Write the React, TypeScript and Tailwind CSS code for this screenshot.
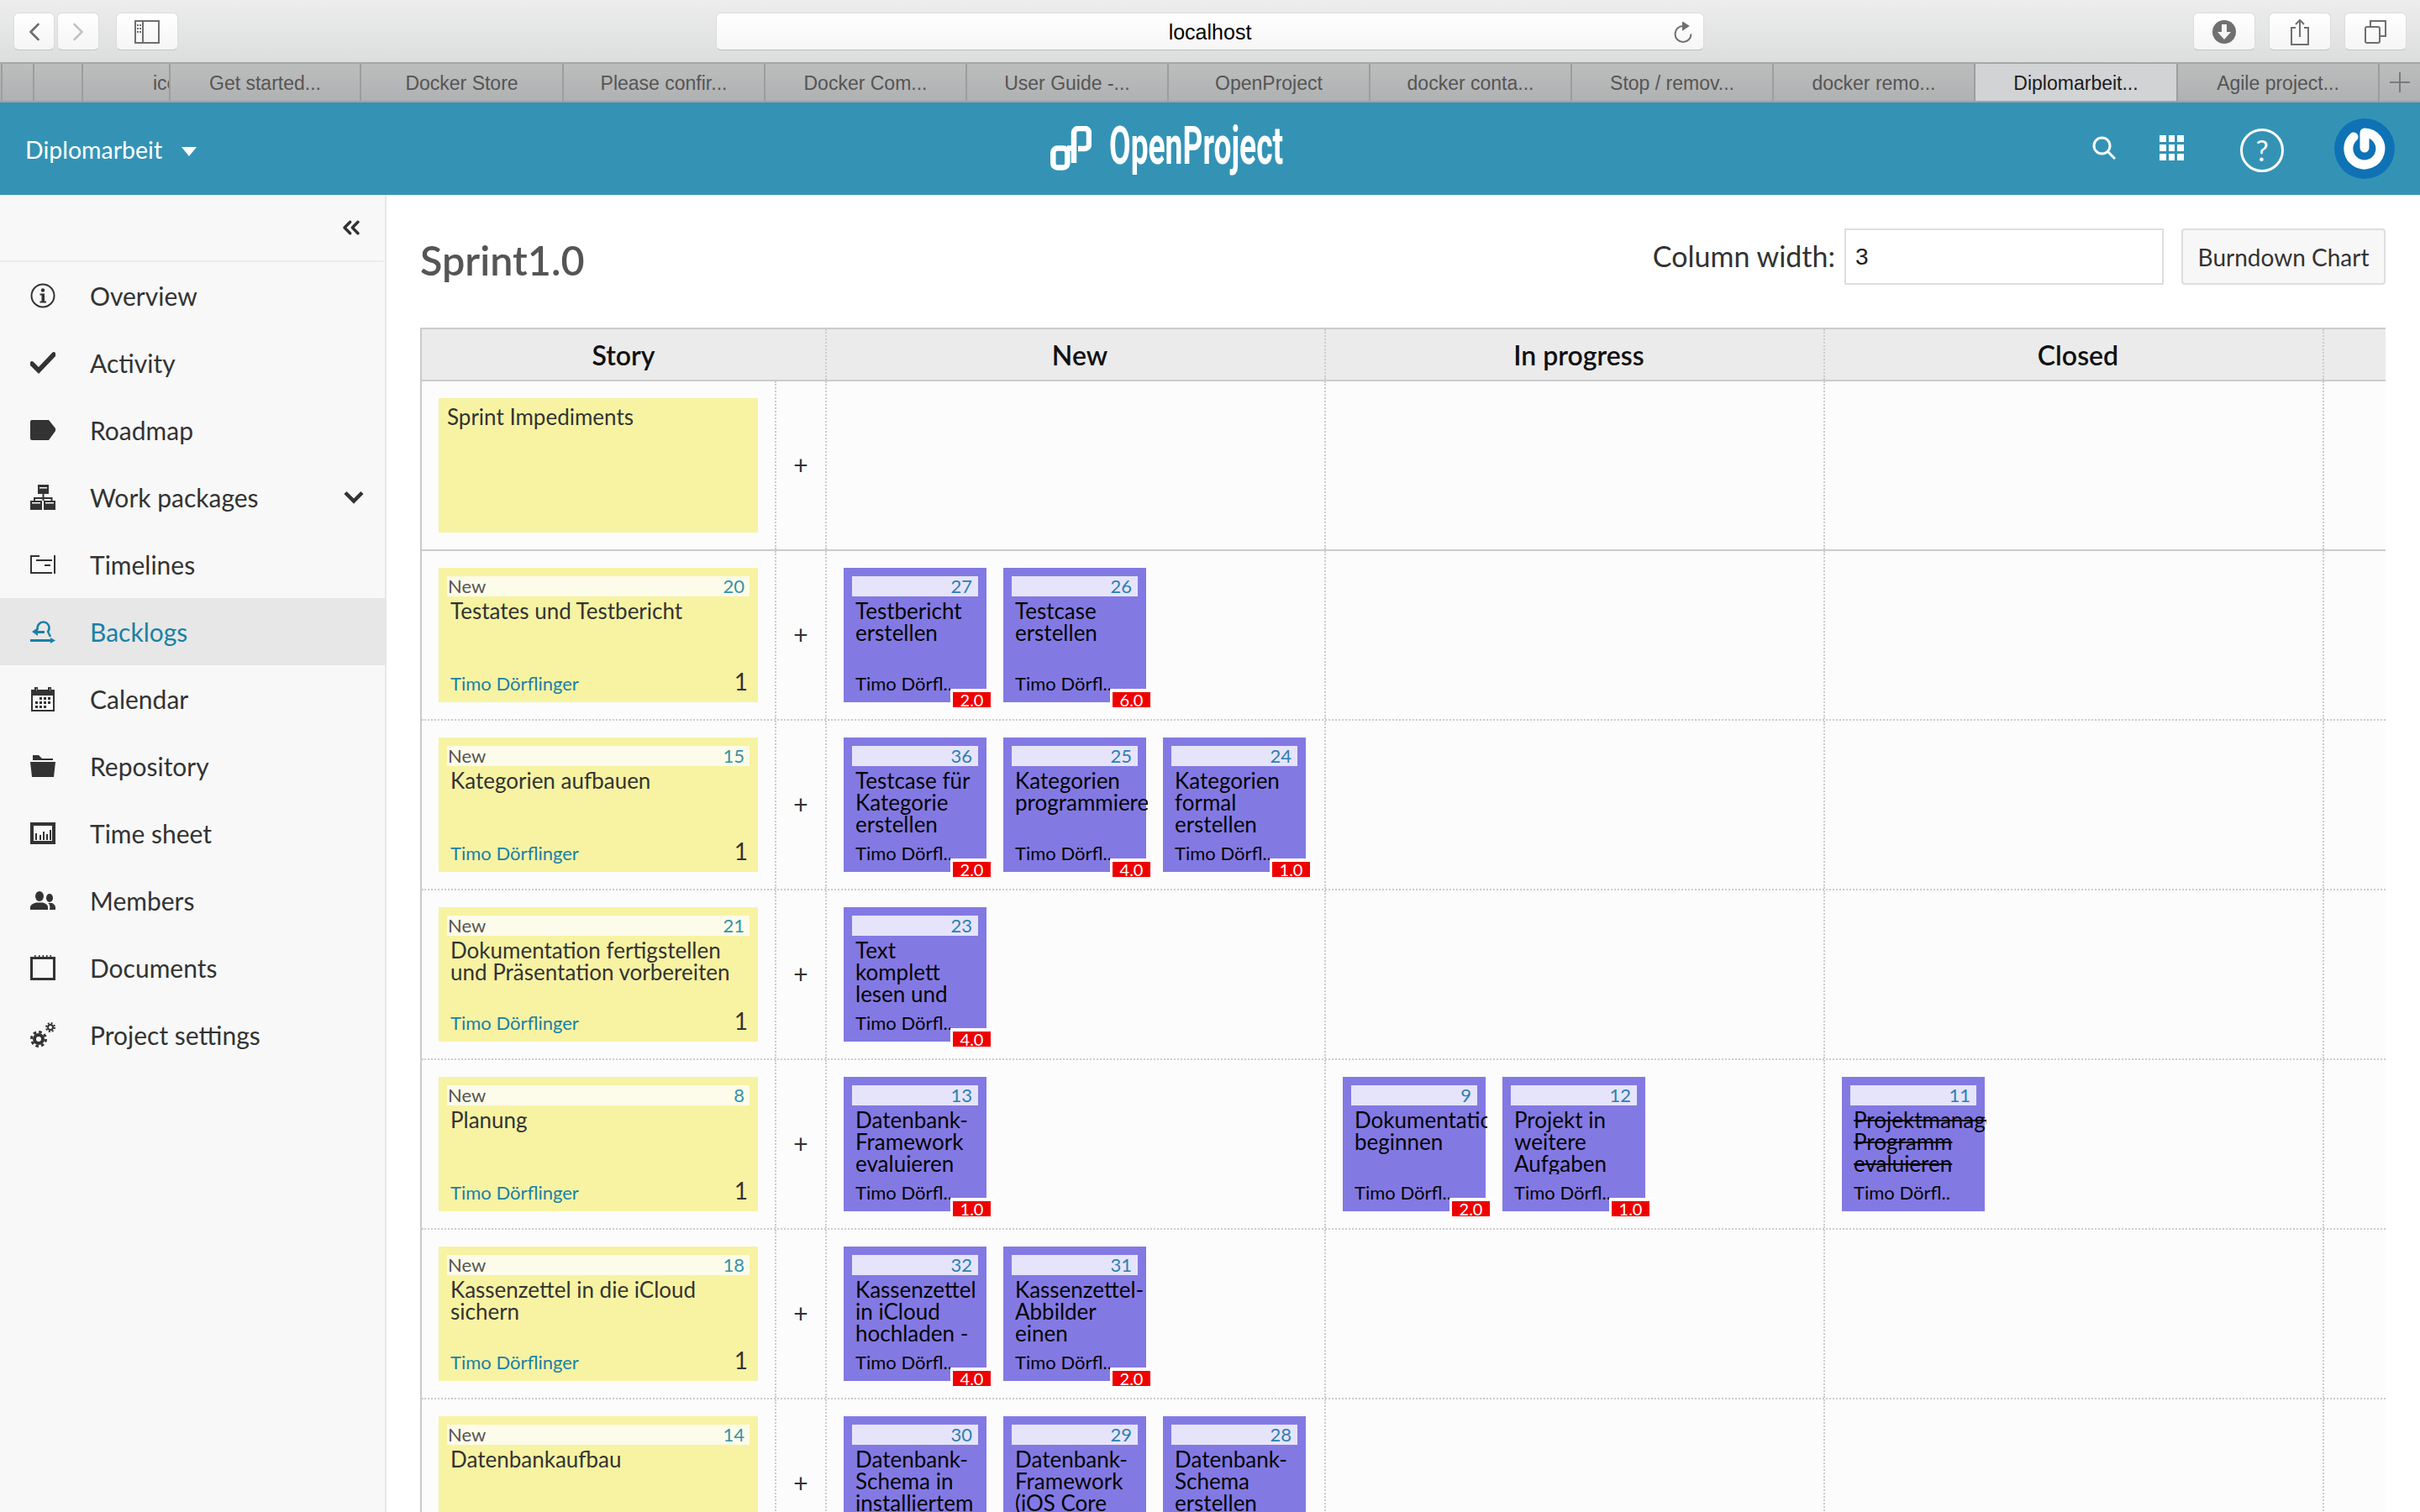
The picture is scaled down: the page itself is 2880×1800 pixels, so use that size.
import { ChevronLeft, ChevronRight, ChevronsLeft } from 'lucide-react';

type Task = { id: number; title: string; hours?: string; closed?: boolean };
type Story = { id: number; title: string; fresh: Task[]; progress?: Task[]; done?: Task[] };

const tabs = [
  { w: 'w-[3px]', label: '' },
  { w: 'w-[38px]', label: '' },
  { w: 'w-[58px]', label: '' },
  { w: 'w-[104px]', label: 'icon', clip: true },
  { w: 'w-[227px]', label: 'Get started...' },
  { w: 'w-[241px]', label: 'Docker Store' },
  { w: 'w-[240px]', label: 'Please confir...' },
  { w: 'w-[240px]', label: 'Docker Com...' },
  { w: 'w-[240px]', label: 'User Guide -...' },
  { w: 'w-[240px]', label: 'OpenProject' },
  { w: 'w-[240px]', label: 'docker conta...' },
  { w: 'w-[240px]', label: 'Stop / remov...' },
  { w: 'w-[240px]', label: 'docker remo...' },
  { w: 'w-[241px]', label: 'Diplomarbeit...', active: true },
  { w: 'w-[240px]', label: 'Agile project...' },
];

const stories: Story[] = [
  {
    id: 20,
    title: 'Testates und Testbericht',
    fresh: [
      { id: 27, title: 'Testbericht erstellen', hours: '2.0' },
      { id: 26, title: 'Testcase erstellen', hours: '6.0' },
    ],
  },
  {
    id: 15,
    title: 'Kategorien aufbauen',
    fresh: [
      { id: 36, title: 'Testcase für Kategorie erstellen', hours: '2.0' },
      { id: 25, title: 'Kategorien programmieren', hours: '4.0' },
      { id: 24, title: 'Kategorien formal erstellen', hours: '1.0' },
    ],
  },
  {
    id: 21,
    title: 'Dokumentation fertigstellen und Präsentation vorbereiten',
    fresh: [{ id: 23, title: 'Text komplett lesen und', hours: '4.0' }],
  },
  {
    id: 8,
    title: 'Planung',
    fresh: [{ id: 13, title: 'Datenbank-Framework evaluieren', hours: '1.0' }],
    progress: [
      { id: 9, title: 'Dokumentation beginnen', hours: '2.0' },
      { id: 12, title: 'Projekt in weitere Aufgaben', hours: '1.0' },
    ],
    done: [{ id: 11, title: 'Projektmanagement Programm evaluieren', closed: true }],
  },
  {
    id: 18,
    title: 'Kassenzettel in die iCloud sichern',
    fresh: [
      { id: 32, title: 'Kassenzettel in iCloud hochladen -', hours: '4.0' },
      { id: 31, title: 'Kassenzettel-Abbilder einen', hours: '2.0' },
    ],
  },
  {
    id: 14,
    title: 'Datenbankaufbau',
    fresh: [
      { id: 30, title: 'Datenbank-Schema in installiertem' },
      { id: 29, title: 'Datenbank-Framework (iOS Core' },
      { id: 28, title: 'Datenbank-Schema erstellen' },
    ],
  },
];

function MenuIcon({ name }: { name: string }) {
  const common = { width: 30, height: 30, viewBox: '0 0 30 30', fill: 'currentColor' };
  switch (name) {
    case 'info':
      return (
        <svg {...common}>
          <circle cx="15" cy="15" r="13.5" fill="none" stroke="currentColor" strokeWidth="2" />
          <circle cx="15" cy="8.5" r="2.2" />
          <path d="M11.5 12.5h5.5v9h2v2h-7.500v-2h2v-7h-2z" />
        </svg>
      );
    case 'check':
      return (
        <svg {...common}>
          <path d="M2 16l8 8L28 5" fill="none" stroke="currentColor" strokeWidth="5.500" strokeLinecap="round" />
        </svg>
      );
    case 'tag':
      return (
        <svg {...common}>
          <path d="M2 3h20l8 10v3l-8 11H2a2 2 0 0 1-2-2V5a2 2 0 0 1 2-2z" />
        </svg>
      );
    case 'tree':
      return (
        <svg {...common}>
          <path d="M9 0h13v11H9zM14.5 11h2v4h10v4h-2v-2H16.5v2h-2v-2H6v2H4v-4h10.500z" />
          <path d="M0 19h14v11H0zM16 19h14v11H16z" />
          <path d="M11 3h9v1.500h-9zM2 21h10v1.500H2zM18 21h10v1.500H18z" fill="#f8f8f8" />
        </svg>
      );
    case 'timeline':
      return (
        <svg {...common}>
          <path d="M0 4h2v22H0zM28 4h2v22h-2zM2 4h9v2H2zM7 9h19v2H7zM17 15h7v2h-7zM2 24h24v2H2z" />
        </svg>
      );
    case 'backlog':
      return (
        <svg {...common}>
          <path d="M0 24h24v-2l6 3.500-6 3.500v-2H0z" />
          <path d="M9 13A7 7 0 1 1 21 15l3 6" fill="none" stroke="currentColor" strokeWidth="2.400" />
          <path d="M2 15l7-5v4h8v3H9v3z" />
        </svg>
      );
    case 'calendar':
      return (
        <svg {...common}>
          <path
            fillRule="evenodd"
            d="M1 4h4V1h4v3h12V1h4v3h4v26H1zM3 11v17h24V11zM7 2.500v3h.5v-3zM23 2.500v3h.5v-3z"
          />
          <path d="M11 13h3v3h-3zM16 13h3v3h-3zM21 13h3v3h-3zM6 18h3v3H6zM11 18h3v3h-3zM16 18h3v3h-3zM21 18h3v3h-3zM6 23h3v3H6zM11 23h3v3h-3zM16 23h3v3h-3z" />
        </svg>
      );
    case 'folder':
      return (
        <svg {...common}>
          <path d="M3 2h7l4 4h13v2H3zM0 10h30l-2 18H2z" />
        </svg>
      );
    case 'sheet':
      return (
        <svg {...common}>
          <path fillRule="evenodd" d="M0 2h30v26H0zM4 6v18h22V6z" />
          <path d="M6 15h2v8H6zM11 17h2v6h-2zM15 13h2v10h-2zM19 16h2v7h-2zM23 11h2v12h-2z" />
        </svg>
      );
    case 'members':
      return (
        <svg {...common}>
          <ellipse cx="11" cy="10" rx="5" ry="6" />
          <path d="M0 26v-3c0-3 4-4.500 7-5.500h8c3 1 6 2.500 6 5.500v3z" />
          <ellipse cx="23" cy="12" rx="4" ry="5" />
          <path d="M23 26h7v-3c0-2-2-4-4-5h-5c2 1 3 4 2 8z" />
        </svg>
      );
    case 'docs':
      return (
        <svg {...common}>
          <rect x="1.500" y="3.500" width="27" height="25" fill="none" stroke="currentColor" strokeWidth="3" />
          <path d="M5 0h1.500v5H5zM10 0h1.500v5H10zM14.500 0H16v5h-1.500zM19 0h1.500v5H19zM23.500 0H25v5h-1.500z" />
        </svg>
      );
    default:
      return (
        <svg {...common}>
          <circle cx="10" cy="20" r="5" fill="none" stroke="currentColor" strokeWidth="4" />
          <circle cx="10" cy="20" r="8.500" fill="none" stroke="currentColor" strokeWidth="3" strokeDasharray="3.500 3.170" />
          <circle cx="24" cy="6" r="3" fill="none" stroke="currentColor" strokeWidth="2" />
          <circle cx="24" cy="6" r="5" fill="none" stroke="currentColor" strokeWidth="2" strokeDasharray="2 1.930" />
        </svg>
      );
  }
}

const menu = [
  { label: 'Overview', icon: 'info' },
  { label: 'Activity', icon: 'check' },
  { label: 'Roadmap', icon: 'tag' },
  { label: 'Work packages', icon: 'tree', expand: true },
  { label: 'Timelines', icon: 'timeline' },
  { label: 'Backlogs', icon: 'backlog', active: true },
  { label: 'Calendar', icon: 'calendar' },
  { label: 'Repository', icon: 'folder' },
  { label: 'Time sheet', icon: 'sheet' },
  { label: 'Members', icon: 'members' },
  { label: 'Documents', icon: 'docs' },
  { label: 'Project settings', icon: 'gears' },
];

function ToolButton({ className, children }: { className: string; children: React.ReactNode }) {
  return (
    <div
      className={`h-[45px] flex items-center justify-center rounded-[6px] bg-gradient-to-b from-white to-[#f5f5f5] border border-[#dcdcdc] border-b-[#c4c4c4] text-[#6f6f6f] ${className}`}
    >
      {children}
    </div>
  );
}

function BrowserChrome() {
  return (
    <>
      <div className="h-[74px] flex items-start pt-[15px] pl-[16px] bg-gradient-to-b from-[#ededed] to-[#dcdedd]">
        <ToolButton className="w-[49px] mr-[3px]">
          <ChevronLeft size={36} strokeWidth={1.8} />
        </ToolButton>
        <ToolButton className="w-[50px] mr-[20px] text-[#c4c4c4]">
          <ChevronRight size={36} strokeWidth={1.8} />
        </ToolButton>
        <ToolButton className="w-[74px] mr-[640px]">
          <svg width="30" height="28" viewBox="0 0 30 28" fill="none" stroke="currentColor" strokeWidth="2">
            <rect x="1" y="1" width="28" height="26" />
            <path d="M10 1v26" />
            <path d="M3 6h5M3 10h5M3 14h5" strokeDasharray="2 1" />
          </svg>
        </ToolButton>
        <div className="relative w-[1176px] h-[45px] flex items-center justify-center pt-[2px] rounded-[6px] bg-gradient-to-b from-white to-[#f6f6f6] border border-[#dcdcdc] border-b-[#bdbdbd] font-['Liberation_Sans',sans-serif] text-[25px] text-black">
          localhost
          <svg className="absolute right-[12px] top-[10px]" width="24" height="26" viewBox="0 0 24 26" fill="none" stroke="#6f6f6f" strokeWidth="2">
            <path d="M12 5a9.500 9.500 0 1 0 9.500 9.500" />
            <path d="M12 1l6 4-6 4z" fill="#6f6f6f" />
          </svg>
        </div>
        <ToolButton className="w-[74px] ml-[582px]">
          <svg width="28" height="30" viewBox="0 0 28 30">
            <circle cx="14" cy="15" r="14" fill="#707070" />
            <path d="M11 6h6v9h5l-8 9-8-9h5z" fill="#f7f7f7" />
          </svg>
        </ToolButton>
        <ToolButton className="w-[74px] ml-[16px]">
          <svg width="24" height="32" viewBox="0 0 24 32" fill="none" stroke="currentColor" strokeWidth="2">
            <path d="M7 11H2v20h20V11h-5M12 22V2M7 7l5-5 5 5" />
          </svg>
        </ToolButton>
        <ToolButton className="w-[74px] ml-[16px]">
          <svg width="26" height="28" viewBox="0 0 26 28" fill="none" stroke="currentColor" strokeWidth="2">
            <rect x="1" y="8" width="17" height="19" rx="2" />
            <path d="M7 7V1h18v18h-6" />
          </svg>
        </ToolButton>
      </div>
      <div className="h-[48px] flex border-y-[2px] border-t-[#a6a6a6] border-b-[#a2a2a2] bg-gradient-to-b from-[#bcbdbd] to-[#b0b1b2] font-['Liberation_Sans',sans-serif] text-[23px] text-[#555]">
        {tabs.map((t, i) => (
          <div
            key={i}
            className={`${t.w} flex items-center pt-[2px] border-r-[2px] border-[#9d9d9d] overflow-hidden ${
              t.clip ? 'justify-start pl-[83px]' : 'justify-center'
            } ${t.active ? 'bg-[#d2d3d5] text-[#1c1c1c]' : ''}`}
          >
            {t.label}
          </div>
        ))}
        <div className="flex-1 flex items-center justify-center text-[#7a7a7a]">
          <svg width="24" height="24" viewBox="0 0 24 24" stroke="currentColor" strokeWidth="2">
            <path d="M12 0v24M0 12h24" />
          </svg>
        </div>
      </div>
    </>
  );
}

function TopNav() {
  return (
    <div className="h-[110px] flex items-center bg-[#3493b5] text-white">
      <div className="w-[1250px] flex items-center pl-[30px] pt-[2px] text-[28.5px]">
        Diplomarbeit
        <span className="ml-[23px] mt-[4px] border-x-[9.500px] border-t-[11px] border-x-transparent border-t-white" />
      </div>
      <svg width="49" height="53" viewBox="0 0 49 53" fill="none" stroke="white" strokeWidth="6.500" className="mt-[-2px]">
        <rect x="3.300" y="26.500" width="17" height="23" rx="5" />
        <path d="M28 44V8a5 5 0 0 1 5-5h8a5 5 0 0 1 5 5v14a5 5 0 0 1-5 5h-8" />
        <path d="M20 26.500h8" />
      </svg>
      <div className="w-[210px] ml-[21px] mt-[-8px] h-[70px] flex items-center">
        <span className="origin-left scale-x-[0.59] font-['Roboto',sans-serif] font-bold text-[63px] leading-none whitespace-nowrap">
          OpenProject
        </span>
      </div>
      <svg className="ml-[960px] mt-[-2px]" width="28" height="28" viewBox="0 0 28 28" fill="none" stroke="white" strokeWidth="3">
        <circle cx="11.500" cy="11.500" r="9.500" />
        <path d="M18 18l9 9" />
      </svg>
      <div className="ml-[52px] grid grid-cols-3 gap-[3px] w-[29px] mt-[-2px]">
        {Array.from({ length: 9 }).map((_, i) => (
          <span key={i} className="h-[8px] bg-white" />
        ))}
      </div>
      <div className="ml-[67px] w-[52px] h-[52px] rounded-full border-[3px] border-white flex items-center justify-center text-[34px] leading-none mt-[3px]">
        ?
      </div>
      <div className="ml-[60px] w-[72px] h-[72px] rounded-full bg-[#0e72b5] flex items-center justify-center">
        <svg width="50" height="50" viewBox="0 0 50 50" fill="none" stroke="white" strokeWidth="11" strokeLinecap="round">
          <path d="M12 11A19 19 0 1 0 25 6V24" strokeLinejoin="round" />
        </svg>
      </div>
    </div>
  );
}

function Sidebar() {
  return (
    <div className="w-[460px] shrink-0 bg-[#f8f8f8] border-r-[2px] border-[#e7e7e7] text-[#333]">
      <div className="h-[80px] flex items-center justify-end pr-[24px] border-b-[2px] border-[#ededed]">
        <ChevronsLeft size={32} strokeWidth={2.6} />
      </div>
      {menu.map((m) => (
        <div
          key={m.label}
          className={`h-[80px] flex items-center pl-[36px] text-[30px] ${
            m.active ? 'bg-[#e7e7e7] text-[#1a80a6]' : ''
          }`}
        >
          <span className="w-[30px] h-[34px] flex items-center justify-center mr-[41px]">
            <MenuIcon name={m.icon} />
          </span>
          {m.label}
          {m.expand && (
            <svg className="ml-auto mr-[25px]" width="24" height="16" viewBox="0 0 24 16" fill="none" stroke="currentColor" strokeWidth="4.500">
              <path d="M2 2.500l10 10 10-10" />
            </svg>
          )}
        </div>
      ))}
    </div>
  );
}

function TaskCard({ task }: { task: Task }) {
  return (
    <div className="relative w-[170px] h-[160px] shrink-0 bg-[#8379e3] text-[#050505]">
      <div className="mx-[10px] mt-[10px] h-[24px] flex items-center justify-end pr-[7px] pb-[2px] bg-[#e6e4fa] text-[22px] text-[#2b80b2]">
        {task.id}
      </div>
      <div className="ml-[14px] mt-[4px] w-[158px] h-[78px] overflow-hidden text-[26px] leading-[26px]">
        <div className={`w-[150px] ${task.closed ? 'line-through' : ''}`}>{task.title}</div>
      </div>
      <div className="ml-[14px] mt-[8px] h-[26px] flex items-center text-[22px] whitespace-nowrap">Timo Dörfl..</div>
      {task.hours && (
        <div className="absolute left-[127px] top-[144px] w-[52px] h-[26px] bg-white flex items-center justify-center pr-[1px]">
          <span className="w-[45px] h-[18px] bg-[#ef0000] text-white text-[20px] leading-[18px] text-center">{task.hours}</span>
        </div>
      )}
    </div>
  );
}

function TaskCell({ tasks, className }: { tasks?: Task[]; className: string }) {
  return (
    <div className={`flex gap-[20px] pt-[20px] pl-[20px] border-r-[2px] border-dotted border-[#ccc] shrink-0 ${className}`}>
      {tasks?.map((t) => <TaskCard key={t.id} task={t} />)}
    </div>
  );
}

function PlusCell() {
  return (
    <div className="w-[60px] shrink-0 flex items-center justify-center pb-[1px] border-r-[2px] border-dotted border-[#ccc] text-[30px] text-[#333]">
      +
    </div>
  );
}

function StoryRow({ story }: { story: Story }) {
  return (
    <div className="h-[202px] flex border-b-[2px] border-dotted border-[#ccc]">
      <div className="w-[422px] shrink-0 pt-[20px] pl-[20px] border-r-[2px] border-dotted border-[#ccc]">
        <div className="w-[380px] h-[160px] bg-[#f7f3a3] text-[#333]">
          <div className="mx-[10px] pt-[10px]">
            <div className="h-[24px] flex items-center justify-between pl-[1px] pr-[6px] pb-[2px] bg-[#fdfbe9] text-[22px]">
              <span className="text-[#555]">New</span>
              <span className="text-[#3592a8]">{story.id}</span>
            </div>
          </div>
          <div className="ml-[14px] mt-[4px] w-[350px] h-[78px] overflow-hidden text-[26px] leading-[26px]">
            {story.title}
          </div>
          <div className="ml-[14px] mr-[12px] mt-[8px] h-[26px] flex items-center justify-between">
            <span className="text-[22px] text-[#1a80a6]">Timo Dörflinger</span>
            <span className="text-[28px] -mt-[4px]">1</span>
          </div>
        </div>
      </div>
      <PlusCell />
      <TaskCell tasks={story.fresh} className="w-[594px]" />
      <TaskCell tasks={story.progress} className="w-[594px]" />
      <TaskCell tasks={story.done} className="w-[594px]" />
    </div>
  );
}

function Board() {
  return (
    <div className="ml-[40px] mr-[41px] border-l-[2px] border-[#cbcbcb] bg-[#fcfcfc]">
      <div className="h-[64px] flex border-y-[2px] border-[#cbcbcb] bg-[#ebebeb] text-[32px] font-semibold text-[#111]">
        <div className="w-[482px] shrink-0 flex items-center justify-center pt-[2px] border-r-[2px] border-dotted border-[#ccc]">Story</div>
        {['New', 'In progress', 'Closed'].map((c) => (
          <div key={c} className="w-[594px] shrink-0 flex items-center justify-center pl-[10px] pt-[2px] border-r-[2px] border-dotted border-[#ccc]">
            {c}
          </div>
        ))}
      </div>
      <div className="h-[202px] flex border-b-[2px] border-[#cbcbcb]">
        <div className="w-[422px] shrink-0 pt-[20px] pl-[20px] border-r-[2px] border-dotted border-[#ccc]">
          <div className="w-[380px] h-[160px] bg-[#f7f3a3] pt-[10px] pl-[10px] text-[26px] leading-[24px] text-[#333]">
            Sprint Impediments
          </div>
        </div>
        <PlusCell />
        <TaskCell className="w-[594px]" />
        <TaskCell className="w-[594px]" />
        <TaskCell className="w-[594px]" />
      </div>
      {stories.map((s) => (
        <StoryRow key={s.id} story={s} />
      ))}
    </div>
  );
}

export default function App() {
  return (
    <div className="w-[2880px] h-[1800px] overflow-hidden bg-white font-['Lato',sans-serif]">
      <BrowserChrome />
      <TopNav />
      <div className="flex h-[1568px]">
        <Sidebar />
        <div className="flex-1 min-w-0">
          <div className="mt-[40px] ml-[40px] mr-[41px] mb-[51px] h-[67px] flex items-center">
            <h2 className="text-[48.5px] font-semibold text-[#555] mr-auto mt-[8px]">Sprint1.0</h2>
            <span className="text-[34px] text-[#333] mr-[11px] mb-[3px]">Column width:</span>
            <div className="w-[380px] h-[67px] border-[2px] border-[#dedede] bg-white flex items-center pl-[11px] font-['Liberation_Sans',sans-serif] text-[28px] text-[#222]">
              3
            </div>
            <div className="ml-[21px] w-[243px] h-[67px] flex items-center justify-center rounded-[4px] border-[2px] border-[#dedede] bg-[#f7f7f7] text-[28px] text-[#333]">
              Burndown Chart
            </div>
          </div>
          <Board />
        </div>
      </div>
    </div>
  );
}
